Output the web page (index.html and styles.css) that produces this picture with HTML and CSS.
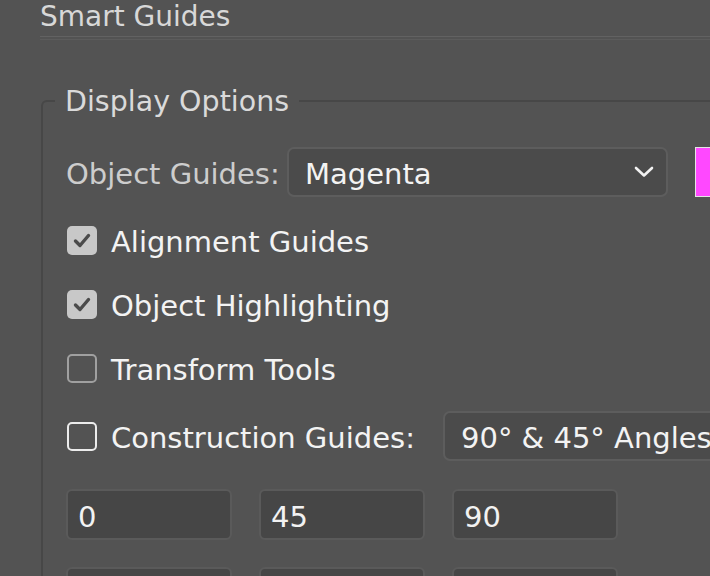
FILE: index.html
```html
<!DOCTYPE html>
<html lang="en">
<head>
    <meta charset="UTF-8">
    <title>Smart Guides</title>
    <link rel="stylesheet" href="styles.css">
</head>
<body>
    <div class="panel">
        <h1 class="panel_title">Smart Guides</h1>
        <div class="rule"></div>

        <fieldset class="group">
            <legend>Display Options</legend>

            <div class="row row_select">
                <span class="label dim">Object Guides:</span>
                <div class="dropdown dropdown_color">
                    <span class="label">Magenta</span>
                    <svg class="chevron" width="20" height="12" viewBox="0 0 20 12">
                        <polyline points="2,2 10,9.5 18,2" fill="none" stroke="#f2f2f2" stroke-width="2.6" stroke-linecap="round" stroke-linejoin="round"/>
                    </svg>
                </div>
                <div class="swatch"></div>
            </div>

            <div class="row check_row">
                <span class="box checked">
                    <svg width="30" height="29" viewBox="0 0 30 29"><path d="M8.5 15 L13 19.5 L21.5 9.5" fill="none" stroke="#4b4b4b" stroke-width="3.4" stroke-linecap="round" stroke-linejoin="round"/></svg>
                </span>
                <span class="label">Alignment Guides</span>
            </div>

            <div class="row check_row">
                <span class="box checked">
                    <svg width="30" height="29" viewBox="0 0 30 29"><path d="M8.5 15 L13 19.5 L21.5 9.5" fill="none" stroke="#4b4b4b" stroke-width="3.4" stroke-linecap="round" stroke-linejoin="round"/></svg>
                </span>
                <span class="label">Object Highlighting</span>
            </div>

            <div class="row check_row">
                <span class="box"></span>
                <span class="label">Transform Tools</span>
            </div>

            <div class="row row_select">
                <span class="box focus"></span>
                <span class="label construction_label">Construction Guides:</span>
                <div class="dropdown dropdown_angles">
                    <span class="label">90° &amp; 45° Angles</span>
                </div>
            </div>

            <div class="angles">
                <input type="text" value="0">
                <input type="text" value="45">
                <input type="text" value="90">
                <input type="text" value="">
                <input type="text" value="">
                <input type="text" value="">
            </div>
        </fieldset>
    </div>
</body>
</html>
```

FILE: styles.css
```css
* {
    margin: 0;
    padding: 0;
    box-sizing: border-box;
}

body {
    background-color: #535353;
    font-family: "DejaVu Sans", "Liberation Sans", sans-serif;
    overflow: hidden;
    height: 576px;
}

.panel {
    padding-left: 40px;
    width: 1000px;
}

.panel_title {
    font-size: 28px;
    line-height: 32px;
    font-weight: normal;
    color: #d8d8d8;
    padding-top: 1px;
}

.rule {
    margin-top: 3px;
    height: 4px;
    border-top: 1px solid #626262;
    border-bottom: 1px solid #5c5c5c;
}

.group {
    margin: 43px 0 0 1px;
    padding: 29px 0 40px 23px;
    border: 2px solid #474747;
    border-radius: 6px;
    width: 900px;
    display: flex;
    flex-direction: column;
    gap: 22px;
}

.group legend {
    font-size: 28.5px;
    line-height: 32px;
    color: #dadada;
    padding: 3px 10px 0;
    margin-left: -11px;
}

.row {
    display: flex;
    align-items: center;
}

.row_select {
    height: 50px;
}

.check_row {
    height: 42px;
}

.label {
    font-size: 29px;
    line-height: 34px;
    padding-top: 4px;
    color: #f3f3f3;
    white-space: nowrap;
}

.dim {
    color: #cdcdcd;
    width: 221px;
}

.box {
    width: 30px;
    height: 29px;
    border: 2px solid #a0a0a0;
    border-radius: 5px;
    margin-right: 14px;
    margin-left: 1px;
    flex-shrink: 0;
}

.box.checked {
    background-color: #c8c8c8;
    border: none;
}

.box.focus {
    border-color: #ececec;
}

.construction_label {
    width: 332px;
}

.dropdown {
    height: 50px;
    border: 2px solid #5d5d5d;
    border-radius: 7px;
    background-color: #4b4b4b;
    display: flex;
    align-items: center;
    justify-content: space-between;
    padding: 0 12px 0 16px;
}

.dropdown_color {
    width: 381px;
}

.dropdown_angles {
    width: 320px;
}

.swatch {
    margin-left: 27px;
    width: 40px;
    height: 50px;
    background-color: #ff48ff;
    border: 1px solid #e4e4e4;
}

.angles {
    margin-top: 6px;
    display: grid;
    grid-template-columns: 166px 166px 166px;
    column-gap: 27px;
    row-gap: 27px;
}

.angles input {
    height: 51px;
    background-color: #464646;
    border: 2px solid #5a5a5a;
    border-radius: 6px;
    color: #f2f2f2;
    font-family: "DejaVu Sans", "Liberation Sans", sans-serif;
    font-size: 29px;
    padding: 4px 0 0 10px;
    outline: none;
}
```
